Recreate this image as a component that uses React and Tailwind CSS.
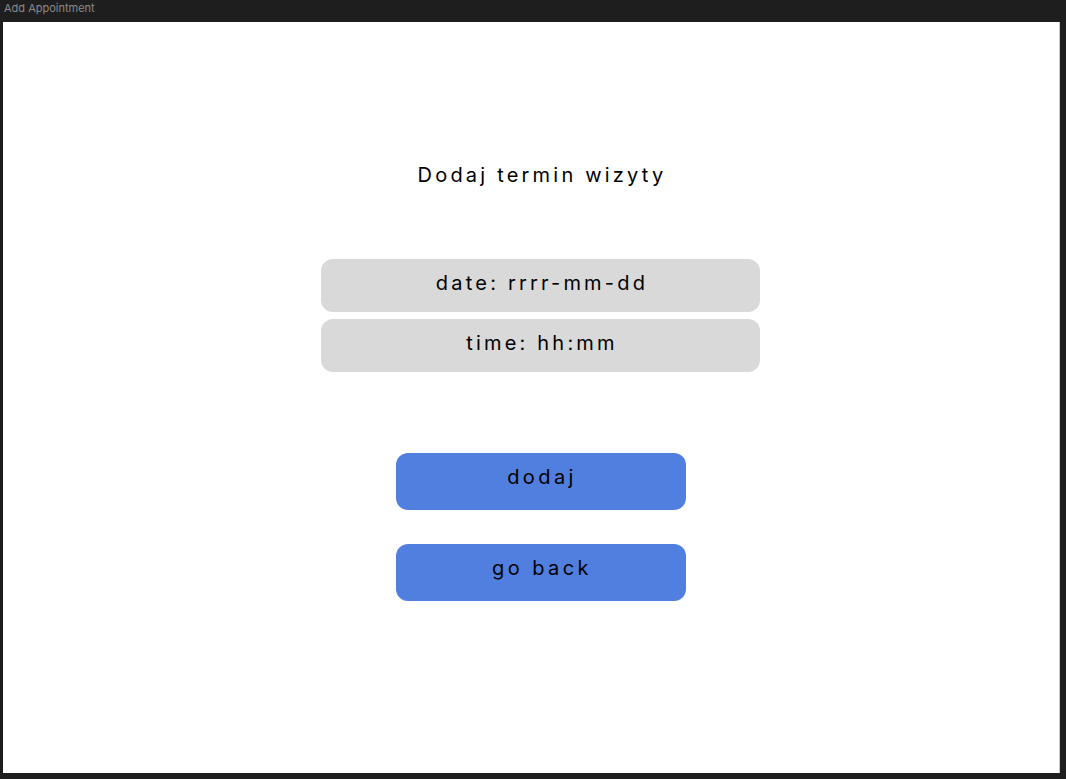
import React, { useState } from "react";

const App = () => {
  const [date, setDate] = useState("");
  const [time, setTime] = useState("");

  return (
    <div className="w-[1066px] h-[779px] bg-[#1e1e1e] flex flex-col font-['Inter','Liberation_Sans',sans-serif]">
      <div className="h-[22px] pl-[4px] pt-[1px] text-[11px] leading-[14px] text-[#8a8a8a]">
        Add Appointment
      </div>
      <div className="ml-[3px] w-[1057px] h-[751px] bg-white border-r border-[#c8c8c8] flex flex-col items-start pl-[318px]">
        <div className="w-[439px] mt-[139px] pl-[3px] text-center text-[20px] leading-[28px] tracking-[0.16em] text-black">
          Dodaj termin wizyty
        </div>
        <div className="w-[439px] mt-[70px] flex flex-col gap-[7px]">
          <input
            value={date}
            onChange={(e) => setDate(e.target.value)}
            placeholder="date: rrrr-mm-dd"
            className="h-[53px] w-full rounded-[12px] bg-[#d9d9d9] text-center text-[20px] tracking-[0.16em] text-black placeholder:text-black outline-none pl-[3px] pb-[6px]"
          />
          <input
            value={time}
            onChange={(e) => setTime(e.target.value)}
            placeholder="time: hh:mm"
            className="h-[53px] w-full rounded-[12px] bg-[#d9d9d9] text-center text-[20px] tracking-[0.16em] text-black placeholder:text-black outline-none pl-[3px] pb-[6px]"
          />
        </div>
        <div className="w-[439px] mt-[81px] flex flex-col items-center gap-[34px]">
          <button className="w-[290px] h-[57px] rounded-[12px] bg-[#517fe0] text-[20px] tracking-[0.17em] text-black pl-[3px] pb-[10px]">
            dodaj
          </button>
          <button className="w-[290px] h-[57px] rounded-[12px] bg-[#517fe0] text-[20px] tracking-[0.17em] text-black pl-[3px] pb-[10px]">
            go back
          </button>
        </div>
      </div>
    </div>
  );
};

export default App;
